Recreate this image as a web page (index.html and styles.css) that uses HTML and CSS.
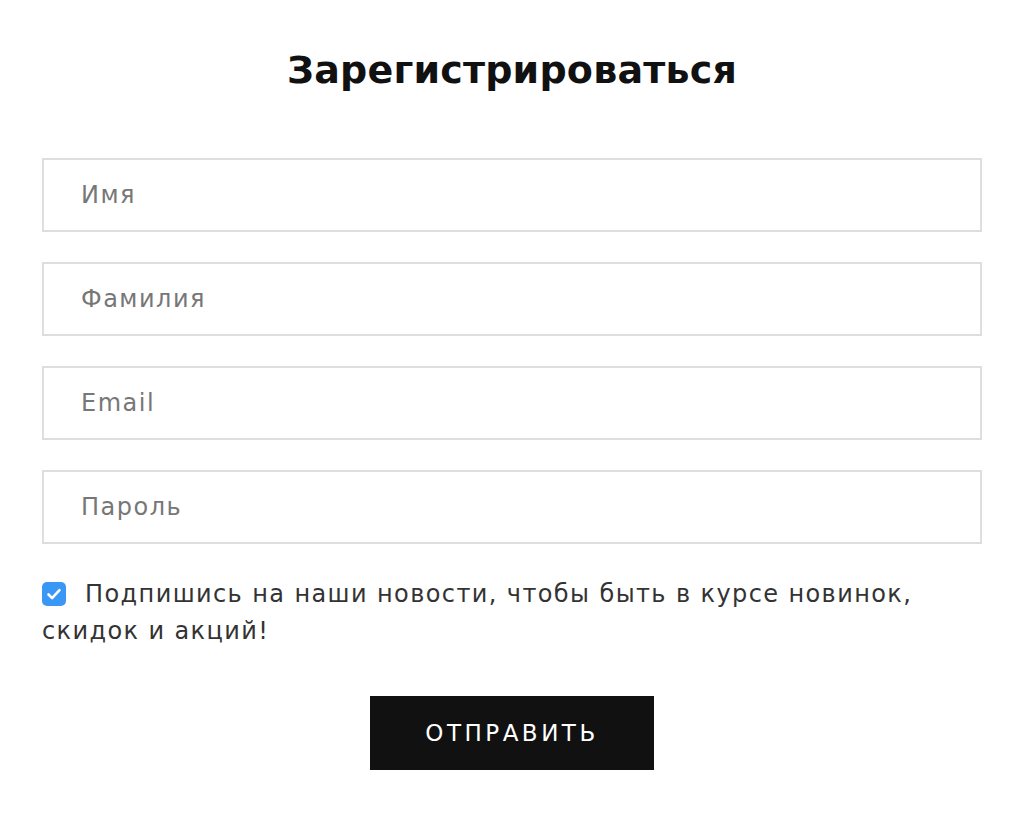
FILE: index.html
```html
<!DOCTYPE html>
<html lang="ru">
<head>
  <meta charset="UTF-8">
  <title>Регистрация</title>
  <link rel="stylesheet" href="styles.css">
</head>
<body>
  <form class="register" action="#" method="POST">
    <h1>Зарегистрироваться</h1>

    <div class="fields">
      <input type="text" name="firstName" placeholder="Имя">
      <input type="text" name="lastName" placeholder="Фамилия">
      <input type="email" name="email" placeholder="Email">
      <input type="password" name="password" placeholder="Пароль">
    </div>

    <label class="subscribe">
      <span class="box">
        <svg viewBox="0 0 24 24" width="24" height="24"><path d="M6.5 12.5l3.6 3.6 7.4-8" fill="none" stroke="#fff" stroke-width="2.6" stroke-linecap="round" stroke-linejoin="round"/></svg>
      </span>
      Подпишись на наши новости, чтобы быть в курсе новинок, скидок и акций!
    </label>

    <div class="actions">
      <button type="submit">Отправить</button>
    </div>
  </form>
</body>
</html>
```

FILE: styles.css
```css
body {
  margin: 0;
  background: #fff;
  font-family: 'DejaVu Sans', 'Noto Sans', sans-serif;
  color: #333;
}
.register {
  padding: 44px 42px 0;
}
h1 {
  margin: 0 0 62px;
  text-align: center;
  font-size: 38px;
  line-height: 52px;
  font-weight: bold;
  color: #111;
  letter-spacing: 0.2px;
}
.fields {
  display: flex;
  flex-direction: column;
  gap: 30px;
}
.fields input {
  box-sizing: border-box;
  width: 100%;
  height: 74px;
  border: 2px solid #dedede;
  padding: 0 37px;
  font-family: inherit;
  font-size: 24px;
  color: #333;
  letter-spacing: 1.5px;
  outline: none;
}
.fields input::placeholder {
  color: #777;
}
.subscribe {
  display: block;
  margin-top: 32px;
  font-size: 24px;
  line-height: 37px;
  letter-spacing: 1.4px;
  color: #333;
}
.box {
  display: inline-block;
  width: 24px;
  height: 24px;
  margin-right: 10px;
  vertical-align: -4px;
  background: #3b97f6;
  border-radius: 5px;
}
.box svg {
  display: block;
}
.actions {
  display: flex;
  justify-content: center;
  margin-top: 46px;
}
button {
  width: 284px;
  height: 74px;
  border: none;
  background: #111;
  color: #fff;
  font-family: inherit;
  font-size: 23px;
  font-weight: normal;
  letter-spacing: 3.5px;
  text-transform: uppercase;
  cursor: pointer;
}
```
